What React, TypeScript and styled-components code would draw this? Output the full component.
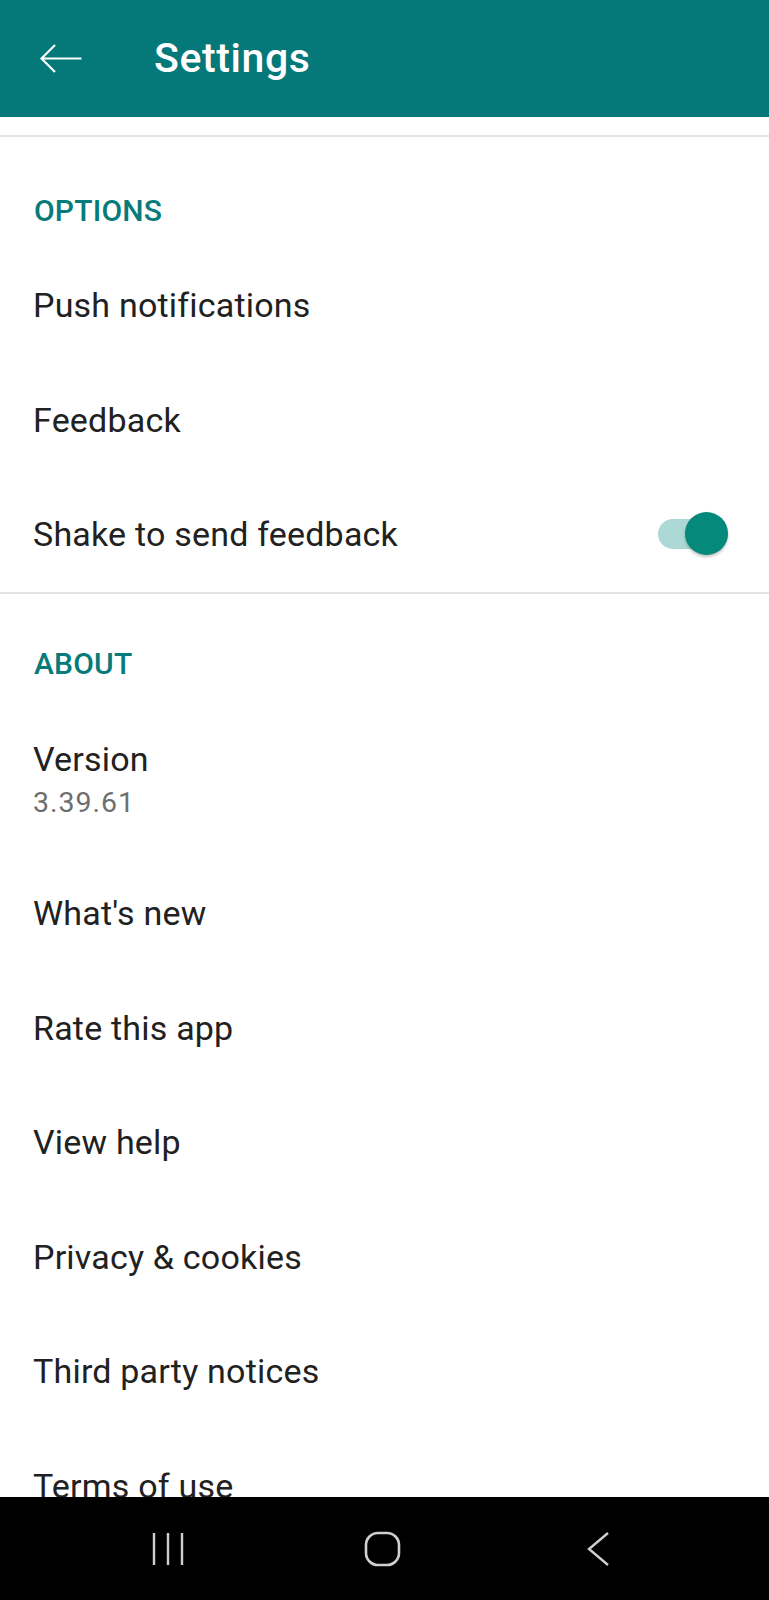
import React from "react";
import styled, { createGlobalStyle } from "styled-components";

const GlobalStyle = createGlobalStyle`
html, body {
  margin: 0;
  padding: 0;
  background: #fff;
}
* {
  box-sizing: border-box;
}
`;

const Screen = styled.div`
display: flex;
flex-direction: column;
height: 1600px;
overflow: hidden;
font-family: Roboto, "Noto Sans", sans-serif;
background: #fff;
`;

const AppBar = styled.header`
display: flex;
align-items: center;
flex: 0 0 117px;
padding-left: 40px;
background: #05787a;
color: #fff;
`;

const BackButton = styled.button.attrs({ type: "button" })`
display: flex;
padding: 0;
margin: 0 72px 0 0;
border: none;
background: none;
cursor: pointer;
`;

const Title = styled.h1`
margin: 0;
font-size: 41px;
line-height: 47px;
font-weight: 500;
letter-spacing: 0.6px;
`;

const Content = styled.main`
flex: 1;
overflow: hidden;
`;

const TopGap = styled.div`
height: 20px;
border-bottom: 2px solid #e4e4e4;
`;

const SectionTitle = styled.h2<{ $top: number }>`
height: 111px;
margin: 0;
padding: ${(p) => p.$top}px 0 0 34px;
font-size: 30px;
line-height: 36px;
font-weight: 500;
color: #077a7a;
letter-spacing: 0.2px;
`;

const Row = styled.div`
display: flex;
align-items: center;
justify-content: space-between;
height: 114.5px;
padding: 0 41px 0 33px;
`;

const StackRow = styled.div`
display: flex;
flex-direction: column;
height: 151.5px;
padding: 34px 41px 0 33px;
`;

const Label = styled.span`
font-size: 34px;
line-height: 40px;
color: #212121;
letter-spacing: 0.2px;
`;

const SubLabel = styled.span`
margin-top: 7px;
font-size: 28.5px;
line-height: 34px;
color: #6e6e6e;
letter-spacing: 1px;
`;

const Divider = styled.hr`
margin: 0;
border: none;
height: 2px;
background: #e4e4e4;
`;

const Switch = styled.div`
position: relative;
width: 70px;
height: 44px;
`;

const SwitchTrack = styled.div`
position: absolute;
left: 0;
top: 7px;
width: 70px;
height: 30px;
border-radius: 15px;
background: #acd9d5;
`;

const SwitchThumb = styled.div`
position: absolute;
right: 0;
top: 0;
width: 43px;
height: 43px;
border-radius: 50%;
background: #04897b;
box-shadow: 0 2px 3px rgba(0, 0, 0, 0.25);
`;

const NavBar = styled.nav`
flex: 0 0 103px;
display: grid;
grid-template-columns: repeat(3, 215px);
justify-content: center;
align-items: center;
padding-right: 4px;
background: #000;
`;

const NavSlot = styled.div`
display: flex;
justify-content: center;
align-items: center;
`;

const BackArrow = () => (
  <svg width="42" height="30" viewBox="0 0 42 30" fill="none">
    <path d="M41.5 14.5H1.5M15 1L1.5 14.5L15 28" stroke="#fff" strokeWidth="2.2" />
  </svg>
);

const options = ["Push notifications", "Feedback"];
const about = ["What's new", "Rate this app", "View help", "Privacy & cookies", "Third party notices", "Terms of use"];

const App: React.FC = () => {
  return (
    <Screen>
      <GlobalStyle />
      <AppBar>
        <BackButton aria-label="Back">
          <BackArrow />
        </BackButton>
        <Title>Settings</Title>
      </AppBar>
      <Content>
        <TopGap />
        <SectionTitle $top={56}>OPTIONS</SectionTitle>
        {options.map((item) => (
          <Row key={item}>
            <Label>{item}</Label>
          </Row>
        ))}
        <Row>
          <Label>Shake to send feedback</Label>
          <Switch role="switch" aria-checked="true">
            <SwitchTrack />
            <SwitchThumb />
          </Switch>
        </Row>
        <Divider />
        <SectionTitle $top={52}>ABOUT</SectionTitle>
        <StackRow>
          <Label>Version</Label>
          <SubLabel>3.39.61</SubLabel>
        </StackRow>
        {about.map((item) => (
          <Row key={item}>
            <Label>{item}</Label>
          </Row>
        ))}
      </Content>
      <NavBar>
        <NavSlot>
          <svg width="32" height="36" viewBox="0 0 32 36" fill="none">
            <path d="M2 2V34M16 2V34M30 2V34" stroke="#cfcfcf" strokeWidth="2.4" />
          </svg>
        </NavSlot>
        <NavSlot>
          <svg width="38" height="36" viewBox="0 0 38 36" fill="none">
            <rect x="2" y="2" width="33" height="32" rx="12" stroke="#cfcfcf" strokeWidth="2.6" />
          </svg>
        </NavSlot>
        <NavSlot>
          <svg width="24" height="36" viewBox="0 0 24 36" fill="none">
            <path d="M22 2L3 18L22 34" stroke="#cfcfcf" strokeWidth="2.4" />
          </svg>
        </NavSlot>
      </NavBar>
    </Screen>
  );
};

export default App;
